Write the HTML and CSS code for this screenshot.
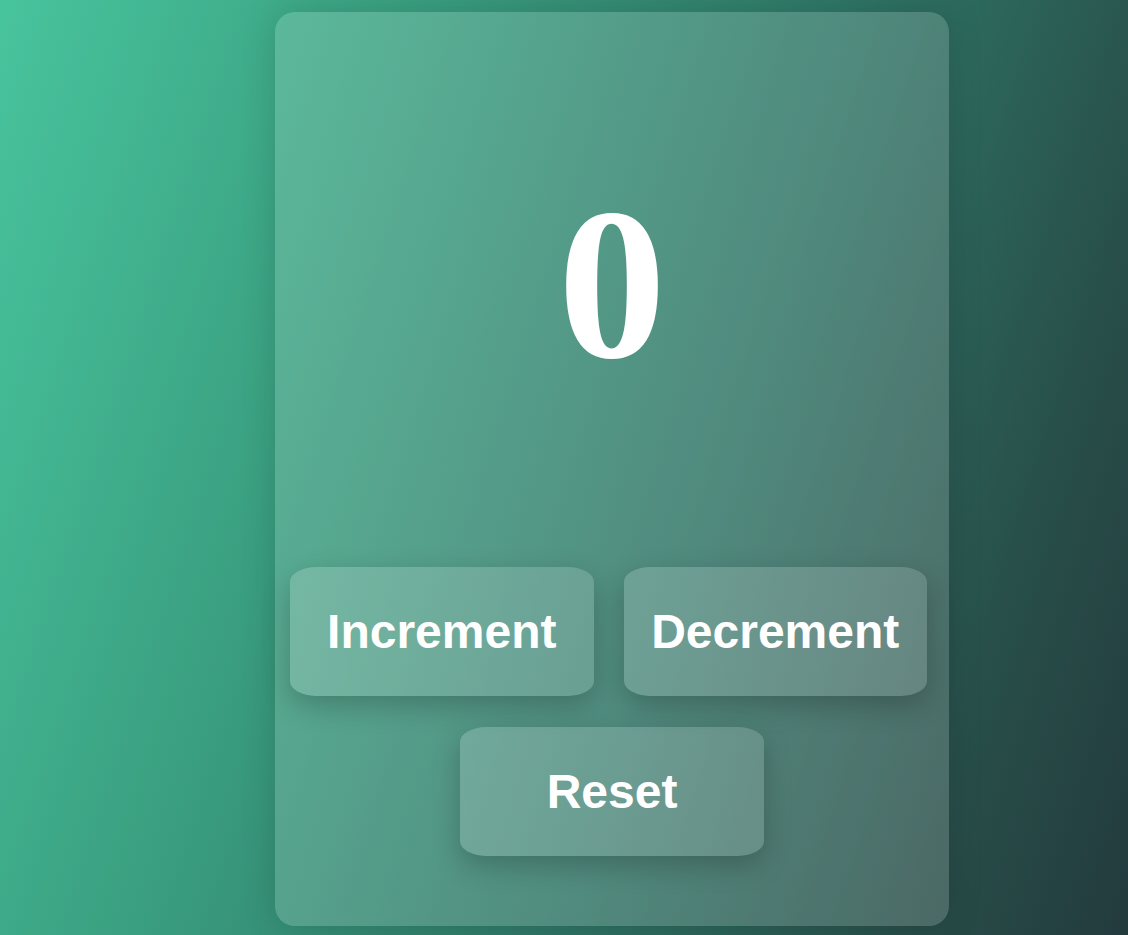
FILE: index.html
```html
<!DOCTYPE html>
<html lang="en">
<head>
<meta charset="utf-8">
<title>Counter</title>
<link rel="stylesheet" href="styles.css">
</head>
<body>
  <main class="card">
    <div class="display"><span class="count">0</span></div>
    <div class="controls">
      <div class="row">
        <button class="btn">Increment</button>
        <button class="btn">Decrement</button>
      </div>
      <div class="row">
        <button class="btn">Reset</button>
      </div>
    </div>
  </main>
</body>
</html>
```

FILE: styles.css
```css
html, body {
  height: 100%;
}
body {
  margin: 0;
  min-height: 935px;
  background: linear-gradient(108deg, #48c49d 0%, #3a9f80 30%, #2f7566 60%, #284f4a 84%, #233a3d 100%);
  font-family: "Liberation Sans", Arial, sans-serif;
  display: flex;
  align-items: flex-start;
  padding: 12px 0 0 275px;
  box-sizing: border-box;
}
.card {
  width: 674px;
  height: 914px;
  box-sizing: border-box;
  border-radius: 20px;
  background: linear-gradient(125deg, rgba(255,255,255,0.15), rgba(255,255,255,0.17));
  box-shadow: 0 0 35px rgba(0,0,0,0.15);
  display: flex;
  flex-direction: column;
}
.display {
  flex: 1;
  display: flex;
  justify-content: center;
  align-items: center;
  padding-bottom: 10px;
}
.count {
  font-family: "Liberation Serif", "Times New Roman", serif;
  font-weight: 700;
  font-size: 216px;
  line-height: 1;
  color: #ffffff;
}
.controls {
  display: flex;
  flex-direction: column;
  gap: 31px;
  padding: 0 22px 70px 15px;
}
.row {
  display: flex;
  justify-content: center;
  gap: 30px;
}
.controls .row:last-child {
  padding-left: 7px;
}
.btn {
  width: 304px;
  height: 129px;
  border: none;
  border-radius: 26px / 15px;
  background: linear-gradient(100deg, rgba(255,255,255,0.17), rgba(255,255,255,0.14));
  box-shadow: 0 10px 28px rgba(0,0,0,0.22);
  color: #ffffff;
  font-family: "Liberation Sans", Arial, sans-serif;
  font-weight: 700;
  font-size: 48px;
  cursor: pointer;
}
```
